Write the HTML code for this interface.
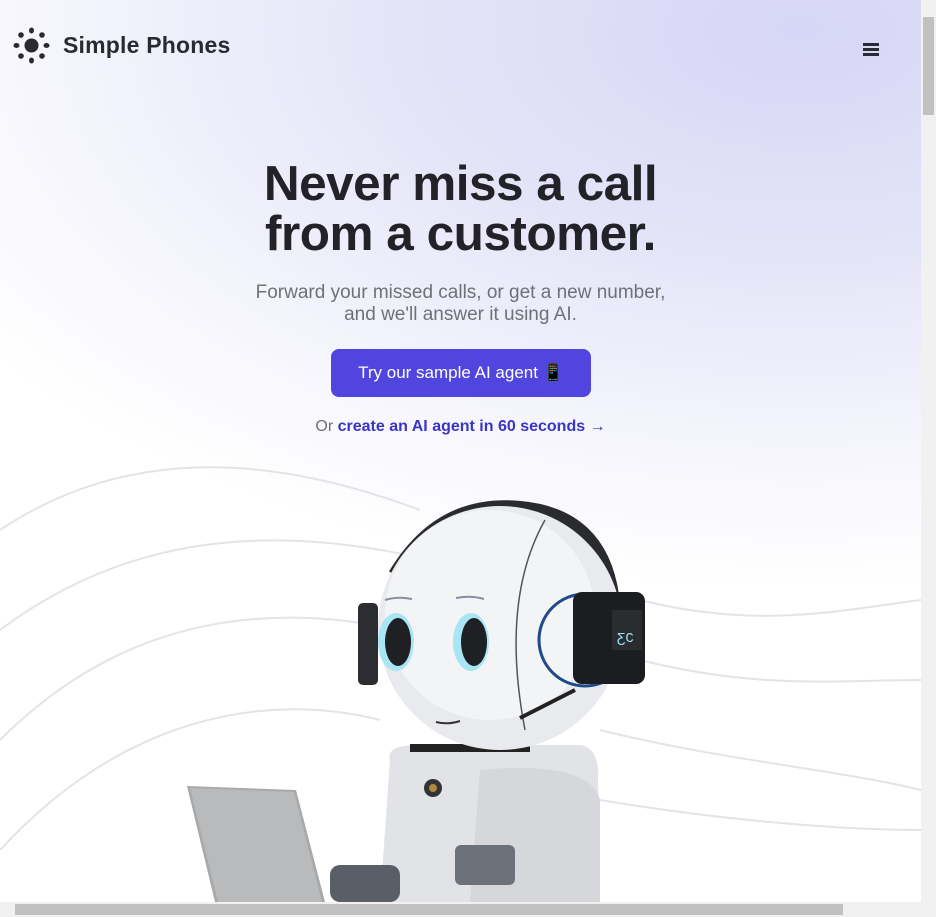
<!DOCTYPE html>
<html><head><meta charset="utf-8"><style>
*{margin:0;padding:0;box-sizing:border-box}
html,body{width:936px;height:917px;overflow:hidden}
body{position:relative;font-family:"Liberation Sans",sans-serif;background:#fff}
.bg{position:absolute;left:0;top:0;width:921px;height:902px;background:radial-gradient(ellipse 1000px 560px at 800px 30px,#d6d6f6 0%,#e4e4f8 40%,#f4f4fc 72%,#fff 100%)}
.logo{position:absolute;left:13px;top:27px;display:flex;align-items:center}
.logo span{font-size:23px;font-weight:bold;color:#2a2a33;margin-left:13px;letter-spacing:0.2px}
.menu{position:absolute;left:863px;top:43px;width:16px}
.menu i{display:block;height:2.5px;background:#2a2a33;margin-bottom:2.5px}
h1{position:absolute;left:0;width:921px;top:159px;text-align:center;font-size:49.5px;line-height:50px;font-weight:bold;color:#222228;letter-spacing:-0.5px}
.sub{position:absolute;left:0;width:921px;top:282px;text-align:center;font-size:19px;line-height:22px;color:#707078}
.btn{position:absolute;left:331px;top:349px;width:260px;height:48px;border-radius:8px;background:#5145df;color:#fff;font-size:17px;text-align:center;line-height:48px}
.or{position:absolute;left:0;width:921px;top:418px;text-align:center;font-size:16px;color:#707078}
.or b{color:#3b35c4}
.vs{position:absolute;left:921px;top:0;width:15px;height:917px;background:#f1f1f1}
.vs i{position:absolute;left:2px;top:17px;width:11px;height:98px;background:#c1c1c1}
.hs{position:absolute;left:0;top:902px;width:921px;height:15px;background:#f1f1f1}
.hs i{position:absolute;left:15px;top:2px;width:828px;height:11px;background:#c1c1c1}
</style></head><body>
<div class="bg"></div>
<svg style="position:absolute;left:0;top:0" width="921" height="902">
<g fill="none" stroke="#e4e4e8" stroke-width="2">
<path d="M0 530 C120 450 260 450 420 510"/>
<path d="M0 630 C120 540 260 520 430 560"/>
<path d="M0 740 C120 620 260 600 400 630"/>
<path d="M0 850 C120 720 260 690 380 720"/>
<path d="M640 600 C760 630 840 610 921 600"/>
<path d="M640 660 C760 690 840 680 921 680"/>
<path d="M600 730 C720 760 840 770 921 790"/>
<path d="M600 800 C720 820 840 830 921 830"/>
</g>
<polygon points="187,786 296,790 325,902 215,902" fill="#a8a9ab"/>
<polygon points="190,788 294,792 322,902 218,902" fill="#b9babc"/>
<path d="M390 760 Q385 745 420 745 L580 745 Q600 748 598 780 L600 902 L380 902 Z" fill="#e2e3e6"/>
<path d="M480 770 Q590 760 600 800 L600 902 L470 902 Z" fill="#d6d7db"/>
<rect x="455" y="845" width="60" height="40" rx="6" fill="#6d717a"/>
<rect x="330" y="865" width="70" height="37" rx="10" fill="#5a5e66"/>
<circle cx="433" cy="788" r="9" fill="#333"/><circle cx="433" cy="788" r="4" fill="#b08840"/>
<rect x="410" y="744" width="120" height="8" fill="#222"/>
<path d="M395 575 Q440 500 520 508 Q600 515 612 595" fill="none" stroke="#2a2b2f" stroke-width="14"/>
<circle cx="500" cy="628" r="122" fill="#e9eaed"/>
<circle cx="490" cy="615" r="105" fill="#f3f4f6"/>
<path d="M545 520 Q500 600 525 730" fill="none" stroke="#555" stroke-width="1.5"/>
<rect x="358" y="603" width="20" height="82" rx="5" fill="#2c2d31"/>
<ellipse cx="396" cy="642" rx="18" ry="29" fill="#a9e6f5"/>
<ellipse cx="398" cy="642" rx="13" ry="24" fill="#1f2024"/>
<ellipse cx="471" cy="642" rx="18" ry="29" fill="#a9e6f5"/>
<ellipse cx="474" cy="642" rx="13" ry="24" fill="#1f2024"/>
<path d="M385 600 Q398 596 412 599 M456 598 Q470 595 484 599" stroke="#8a8ea0" stroke-width="2" fill="none"/>
<path d="M436 722 Q448 725 460 721" stroke="#333" stroke-width="2" fill="none"/>
<circle cx="585" cy="640" r="46" fill="none" stroke="#1f4a8a" stroke-width="3"/>
<path d="M520 718 L575 690" stroke="#222" stroke-width="4"/>
<rect x="573" y="592" width="72" height="92" rx="9" fill="#1c1d20"/>
<rect x="612" y="610" width="30" height="40" fill="#2a2c30"/>
<text x="617" y="642" font-size="14" fill="#9be3ff" font-family="Liberation Mono">ƸC</text>
</svg>
<div class="logo"><svg width="37" height="37" viewBox="0 0 37 37"><g fill="#2a2a33"><circle cx="18.5" cy="18.5" r="7"/><ellipse cx="18.5" cy="3.5" rx="2.5" ry="3"/><ellipse cx="18.5" cy="33.5" rx="2.5" ry="3"/><ellipse cx="3.5" cy="18.5" rx="3" ry="2.5"/><ellipse cx="33.5" cy="18.5" rx="3" ry="2.5"/><circle cx="8" cy="8" r="2.8"/><circle cx="29" cy="8" r="2.8"/><circle cx="8" cy="29" r="2.8"/><circle cx="29" cy="29" r="2.8"/></g></svg><span>Simple Phones</span></div>
<div class="menu"><i></i><i></i><i></i></div>
<h1>Never miss a call<br>from a customer.</h1>
<div class="sub">Forward your missed calls, or get a new number,<br>and we'll answer it using AI.</div>
<div class="btn">Try our sample AI agent 📱</div>
<div class="or">Or <b>create an AI agent in 60 seconds →</b></div>
<div class="vs"><i></i></div>
<div class="hs"><i></i></div>
</body></html>
